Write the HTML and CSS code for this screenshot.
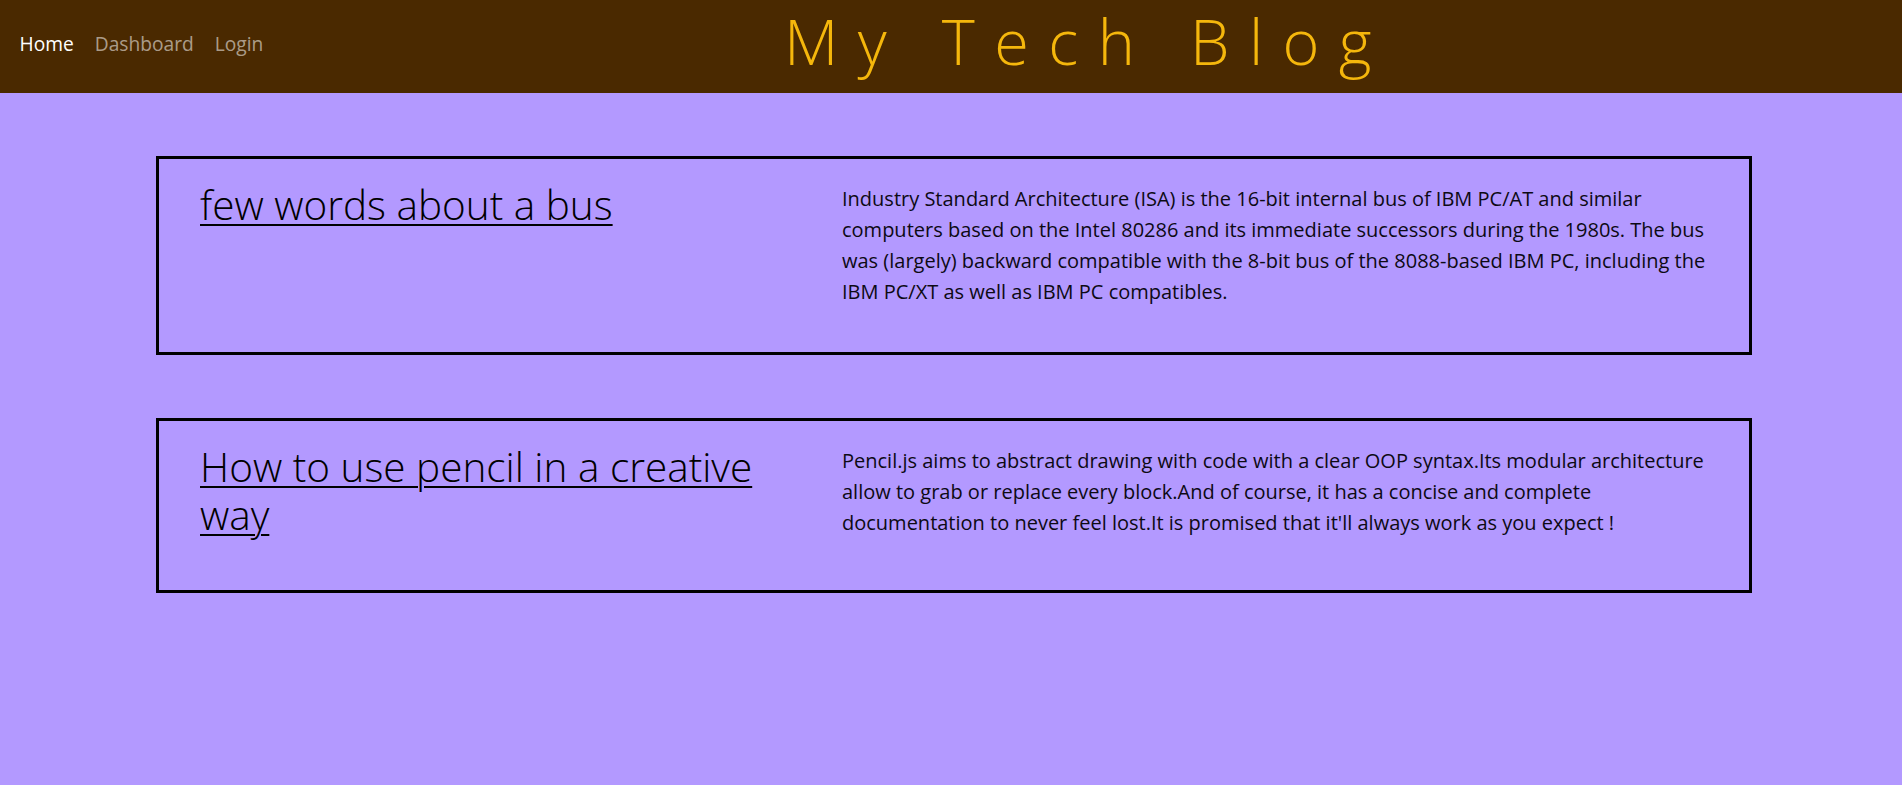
FILE: index.html
```html
<!DOCTYPE html>
<html lang="en">
<head>
<meta charset="utf-8">
<title>My Tech Blog</title>
<link rel="stylesheet" href="styles.css">
</head>
<body>
<header class="topbar">
  <nav class="nav">
    <a class="nav-link active" href="#">Home</a>
    <a class="nav-link" href="#">Dashboard</a>
    <a class="nav-link" href="#">Login</a>
  </nav>
  <h1 class="site-title">My Tech Blog</h1>
</header>
<main class="posts">
  <article class="post">
    <h2 class="post-title"><a href="#">few words about a bus</a></h2>
    <p class="post-body">Industry Standard Architecture (ISA) is the 16-bit internal bus of IBM PC/AT and similar<br>
    computers based on the Intel 80286 and its immediate successors during the 1980s. The bus<br>
    was (largely) backward compatible with the 8-bit bus of the 8088-based IBM PC, including the<br>
    IBM PC/XT as well as IBM PC compatibles.</p>
  </article>
  <article class="post">
    <h2 class="post-title"><a href="#">How to use pencil in a creative way</a></h2>
    <p class="post-body">Pencil.js aims to abstract drawing with code with a clear OOP syntax.Its modular architecture<br>
    allow to grab or replace every block.And of course, it has a concise and complete<br>
    documentation to never feel lost.It is promised that it'll always work as you expect !</p>
  </article>
</main>
</body>
</html>
```
FILE: styles.css
```css
html, body {
  margin: 0;
  padding: 0;
}
body {
  background: #b399ff;
  font-family: "Open Sans", "Noto Sans", sans-serif;
  color: #0d0a14;
  min-height: 785px;
}
.topbar {
  background: #4a2900;
  height: 93px;
  display: flex;
  align-items: flex-start;
}
.nav {
  display: flex;
  padding: 29px 0 0 9px;
  width: 273px;
  box-sizing: border-box;
}
.nav-link {
  font-size: 19.2px;
  line-height: 30px;
  padding: 0 10.5px;
  color: rgba(255, 255, 255, 0.55);
  text-decoration: none;
}
.nav-link.active {
  color: #fff;
}
.site-title {
  flex: 1;
  margin: 0;
  text-align: center;
  font-weight: 300;
  font-size: 63px;
  line-height: 81px;
  letter-spacing: 19.4px;
  color: #f5b70c;
}
.posts {
  padding: 0 150px 0 156px;
}
.post {
  margin-top: 63px;
  border: 3px solid #000;
  padding: 22px 40px 29px 41px;
  display: grid;
  grid-template-columns: 1fr 867px;
  column-gap: 42px;
  align-items: start;
}
.post-title {
  margin: 0 0 22px;
  font-weight: 300;
  font-size: 40.5px;
  line-height: 48px;
}
.post-title a {
  color: #000;
  text-decoration: underline;
  text-decoration-thickness: 2px;
  text-underline-offset: 4px;
}
.post-body {
  margin: 2px 0 16px;
  font-size: 20px;
  line-height: 31px;
  white-space: nowrap;
}
```
